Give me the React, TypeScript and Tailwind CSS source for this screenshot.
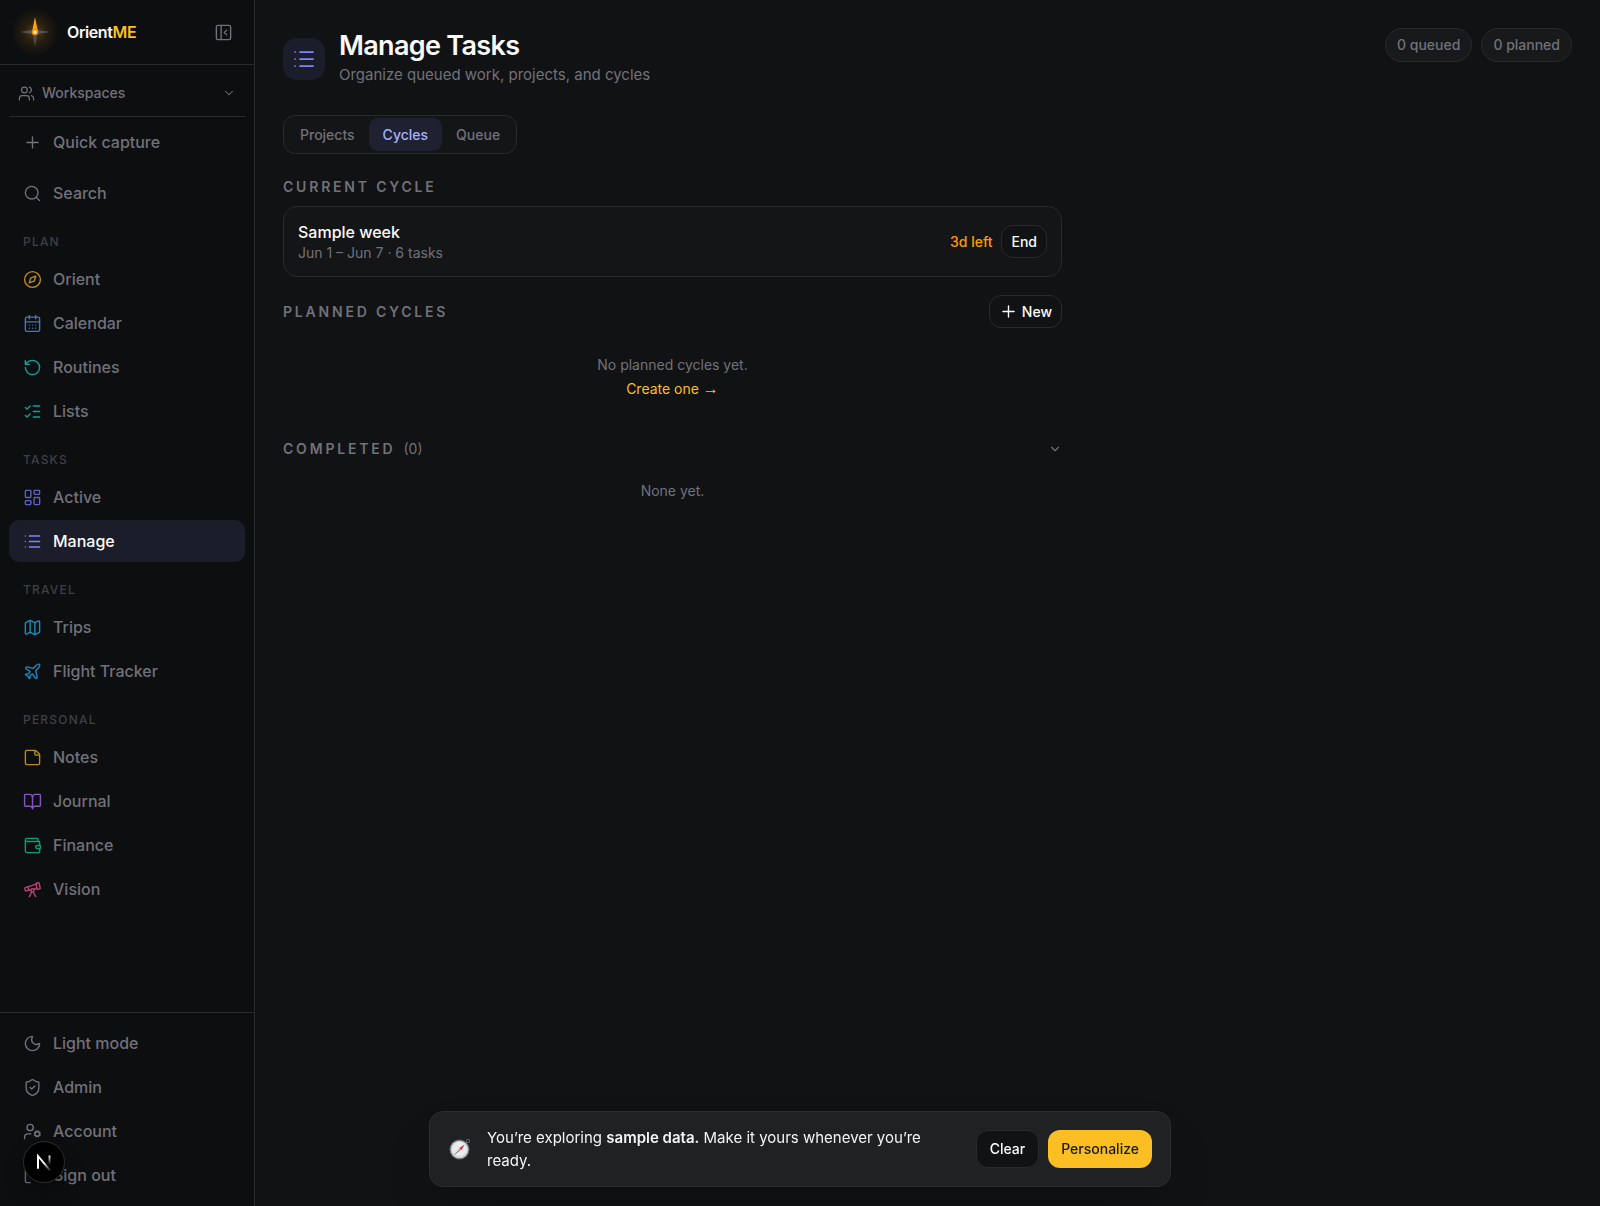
import React, { useState } from "react";
import {
  BookOpen,
  CalendarDays,
  ChevronDown,
  Compass,
  LayoutDashboard,
  List,
  ListChecks,
  LogOut,
  Map,
  Moon,
  PanelLeftClose,
  Plane,
  Plus,
  RotateCcw,
  Search,
  ShieldCheck,
  StickyNote,
  Telescope,
  UserCog,
  Users,
  Wallet,
} from "lucide-react";

const sections = [
  {
    title: "Plan",
    items: [
      { label: "Orient", icon: Compass, color: "text-[#b98b1c]" },
      { label: "Calendar", icon: CalendarDays, color: "text-[#4478bd]" },
      { label: "Routines", icon: RotateCcw, color: "text-[#0fa197]" },
      { label: "Lists", icon: ListChecks, color: "text-[#0fa197]" },
    ],
  },
  {
    title: "Tasks",
    items: [
      { label: "Active", icon: LayoutDashboard, color: "text-[#5d63bd]" },
      { label: "Manage", icon: List, color: "text-[#7c86ff]", active: true },
    ],
  },
  {
    title: "Travel",
    items: [
      { label: "Trips", icon: Map, color: "text-[#1d8bc0]" },
      { label: "Flight Tracker", icon: Plane, color: "text-[#1d8bc0]" },
    ],
  },
  {
    title: "Personal",
    items: [
      { label: "Notes", icon: StickyNote, color: "text-[#b98b1c]" },
      { label: "Journal", icon: BookOpen, color: "text-[#8157bb]" },
      { label: "Finance", icon: Wallet, color: "text-[#0a9f70]" },
      { label: "Vision", icon: Telescope, color: "text-[#b94378]" },
    ],
  },
];

const tabs = ["Projects", "Cycles", "Queue"];

function NavItem({ label, icon: Icon, color = "text-[#71717a]", active = false }: any) {
  return (
    <a
      href="#"
      className={`flex h-[42px] items-center gap-[11px] rounded-[10px] px-[14px] text-base font-medium ${
        active ? "bg-[#1c1d2b] text-[#fafafa]" : "text-[#71717a]"
      }`}
    >
      <Icon size={19} strokeWidth={1.75} className={`shrink-0 ${color}`} />
      {label}
    </a>
  );
}

function Logo() {
  return (
    <svg width="50" height="50" viewBox="0 0 50 50">
      <defs>
        <radialGradient id="glow">
          <stop offset="0" stopColor="#f59e0b" stopOpacity="0.3" />
          <stop offset="0.5" stopColor="#f59e0b" stopOpacity="0.1" />
          <stop offset="1" stopColor="#f59e0b" stopOpacity="0" />
        </radialGradient>
      </defs>
      <circle cx="25" cy="25" r="24" fill="url(#glow)" />
      <path d="M10.500 25 L25 22.200 L39.500 25 L25 27.800Z" fill="#52525b" />
      <path d="M22.200 25 L27.800 25 L25 39.500Z" fill="#4b4b54" />
      <path d="M22 25 L25 10 L28 25Z" fill="#ffa30a" />
      <circle cx="25" cy="25" r="3.200" fill="#f08c0a" />
      <circle cx="25" cy="25" r="1.800" fill="#fff3c4" />
    </svg>
  );
}

function CompassDial() {
  return (
    <svg width="22" height="22" viewBox="0 0 22 22" className="shrink-0">
      <circle cx="19" cy="3" r="1.700" fill="none" stroke="#59636c" strokeWidth="1" />
      <circle cx="10.500" cy="11.500" r="10" fill="#697078" />
      <circle cx="10.500" cy="11.500" r="8.800" fill="#d5d8da" />
      <circle cx="10.500" cy="11" r="7.200" fill="#ececec" />
      <path d="M15.500 6.500 L12.300 12.200 L10.100 10.200Z" fill="#f0202c" />
      <path d="M5.500 16.500 L10.100 10.200 L12.300 12.200Z" fill="#c4c6c8" />
      <path d="M5.500 16.500 L11 11.800" stroke="#6b6f73" strokeWidth="0.800" />
    </svg>
  );
}

function NextBadge() {
  return (
    <button
      aria-label="Open dev tools"
      className="absolute bottom-6 left-6 flex size-10 items-center justify-center rounded-full bg-black shadow-[0_0_0_1px_#2b2b2b,0_8px_20px_rgba(0,0,0,0.3)]"
    >
      <svg width="16" height="17" viewBox="0 0 16 17" fill="none">
        <defs>
          <linearGradient id="diag" x1="8" y1="9" x2="15" y2="17" gradientUnits="userSpaceOnUse">
            <stop stopColor="#fff" />
            <stop offset="1" stopColor="#fff" stopOpacity="0" />
          </linearGradient>
          <linearGradient id="stem" x1="13" y1="1" x2="13" y2="11" gradientUnits="userSpaceOnUse">
            <stop stopColor="#fff" />
            <stop offset="1" stopColor="#fff" stopOpacity="0" />
          </linearGradient>
        </defs>
        <path d="M2 14.500 V2 L14.500 17" stroke="url(#diag)" strokeWidth="1.900" />
        <path d="M2 14.500 V2" stroke="#fff" strokeWidth="1.900" />
        <path d="M13.500 1.500 V11" stroke="url(#stem)" strokeWidth="1.900" />
      </svg>
    </button>
  );
}

function Sidebar() {
  return (
    <aside className="sticky top-0 flex h-screen w-[255px] shrink-0 flex-col border-r border-[#292a2d] bg-[#0d0e10]">
      <div className="flex h-[65px] shrink-0 items-center border-b border-[#292a2d] pr-[21px] pl-[10px]">
        <Logo />
        <span className="ml-[7px] text-base font-semibold tracking-tight text-[#fafafa]">
          Orient<span className="text-[#fbbf24]">ME</span>
        </span>
        <button aria-label="Collapse sidebar" className="ml-auto text-[#71717a]">
          <PanelLeftClose size={19} strokeWidth={1.75} />
        </button>
      </div>

      <div className="mx-[9px] flex h-[52px] shrink-0 items-end border-b border-[#292a2d]">
        <button className="flex h-[46px] w-full items-center gap-[7px] px-[9px] text-sm font-medium text-[#71717a]">
          <Users size={17} strokeWidth={1.75} />
          Workspaces
          <ChevronDown size={14} strokeWidth={1.75} className="ml-auto" />
        </button>
      </div>

      <nav className="flex-1 px-[9px] pt-1">
        <div className="flex flex-col gap-[9px]">
          <NavItem label="Quick capture" icon={Plus} />
          <NavItem label="Search" icon={Search} />
        </div>
        {sections.map((section) => (
          <div key={section.title}>
            <h2 className="flex h-[44px] items-center px-[14px] pt-3 text-xs leading-4 font-medium tracking-widest text-[#3f4046] uppercase">
              {section.title}
            </h2>
            <div className="flex flex-col gap-[2px]">
              {section.items.map((item) => (
                <NavItem key={item.label} {...item} />
              ))}
            </div>
          </div>
        ))}
      </nav>

      <div className="flex flex-col gap-[2px] border-t border-[#292a2d] px-[9px] pt-[9px] pb-[10px]">
        <NavItem label="Light mode" icon={Moon} />
        <NavItem label="Admin" icon={ShieldCheck} />
        <NavItem label="Account" icon={UserCog} />
        <NavItem label="Sign out" icon={LogOut} />
      </div>
      <NextBadge />
    </aside>
  );
}

export default function App() {
  const [tab, setTab] = useState("Cycles");

  return (
    <div className="flex min-h-screen bg-[#111214] font-['Inter',sans-serif] text-[#fafafa] antialiased">
      <Sidebar />

      <main className="flex-1 px-7 pt-7">
        {/* page header */}
        <header className="flex items-start justify-between">
          <div className="flex items-center gap-[14px]">
            <div className="mt-[2px] flex size-[42px] items-center justify-center rounded-[14px] bg-[#1c1d2b] text-[#7c86ff]">
              <List size={24} strokeWidth={1.75} />
            </div>
            <div>
              <h1 className="text-[27px] leading-[35px] font-semibold tracking-tight">Manage Tasks</h1>
              <p className="text-[15px] leading-6 text-[#71717a]">Organize queued work, projects, and cycles</p>
            </div>
          </div>
          <div className="flex gap-[9px] text-sm font-medium text-[#71717a]">
            <span className="flex h-[34px] items-center rounded-full border border-[#292a2d] bg-[#18191b] px-[11px]">0 queued</span>
            <span className="flex h-[34px] items-center rounded-full border border-[#292a2d] bg-[#18191b] px-[11px]">0 planned</span>
          </div>
        </header>

        <div role="tablist" className="mt-7 flex w-fit rounded-[12px] border border-[#292a2d] bg-[#141517] p-[2px]">
          {tabs.map((name) => (
            <button
              key={name}
              role="tab"
              aria-selected={tab === name}
              onClick={() => setTab(name)}
              className={`h-[33px] rounded-[9px] px-[14px] text-sm font-medium ${
                tab === name ? "bg-[#1f2030] text-[#a3b3ff]" : "text-[#71717a]"
              }`}
            >
              {name}
            </button>
          ))}
        </div>

        <div className="mt-[23px] max-w-[779px]">
          <h2 className="text-sm leading-5 font-semibold tracking-[0.2em] text-[#71717a] uppercase">Current cycle</h2>
          <div className="mt-[9px] flex h-[71px] items-center justify-between rounded-[14px] border border-[#292a2d] bg-[#141517] px-[14px]">
            <div>
              <p className="text-base leading-[22px] font-medium">Sample week</p>
              <p className="text-sm leading-5 text-[#71717a]">Jun 1 – Jun 7 · 6 tasks</p>
            </div>
            <div className="flex items-center gap-[9px]">
              <span className="text-sm font-medium text-[#fe9a00]">3d left</span>
              <button className="h-[33px] rounded-[12px] border border-[#292a2d] bg-[#111214] px-[9px] text-sm font-medium">
                End
              </button>
            </div>
          </div>

          <div className="mt-[18px] flex items-center justify-between">
            <h2 className="text-sm leading-5 font-semibold tracking-[0.2em] text-[#71717a] uppercase">Planned cycles</h2>
            <button className="flex h-[33px] items-center gap-1 rounded-[12px] border border-[#292a2d] px-[9px] text-sm font-medium">
              <Plus size={19} strokeWidth={1.75} />
              New
            </button>
          </div>
          <div className="flex flex-col items-center gap-1 pt-[27px] text-sm leading-5">
            <p className="text-[#71717a]">No planned cycles yet.</p>
            <a href="#" className="text-[#fbbf24]">
              Create one <span className="font-['Liberation_Sans',sans-serif] text-base leading-5">→</span>
            </a>
          </div>

          <button className="mt-[40px] flex w-full items-center justify-between text-sm leading-5 text-[#71717a]">
            <span>
              <span className="font-semibold tracking-[0.2em] uppercase">Completed</span>
              <span className="ml-2">(0)</span>
            </span>
            <ChevronDown size={14} strokeWidth={2} />
          </button>
          <p className="mt-[22px] text-center text-sm leading-5 text-[#71717a]">None yet.</p>
        </div>
      </main>

      {/* sample data notice */}
      <div className="fixed bottom-[19px] left-1/2 flex w-[742px] max-w-full -translate-x-1/2 items-center rounded-[14px] border border-[#2c2d30] bg-[#202123] py-[14px] pr-[18px] pl-[19px] shadow-2xl">
        <CompassDial />
        <p className="mr-6 ml-4 flex-1 text-[15px] leading-[23px] text-[#f4f4f5]">
          You’re exploring <strong className="font-semibold">sample data.</strong> Make it yours whenever you’re ready.
        </p>
        <div className="flex gap-[9px] text-sm font-medium">
          <button className="h-[38px] rounded-[12px] border border-[#292a2d] bg-[#111214] px-[13px]">Clear</button>
          <button className="h-[38px] rounded-[12px] bg-[#fbbf24] px-[13px] text-[#18181b]">Personalize</button>
        </div>
      </div>
    </div>
  );
}
